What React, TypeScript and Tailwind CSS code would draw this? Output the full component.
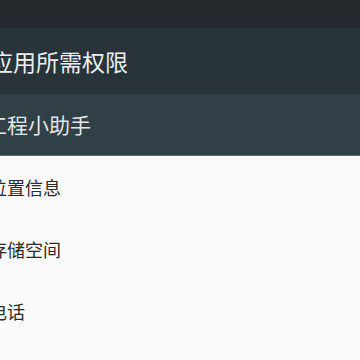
import React from "react";

export default function App() {
  const items = ["位置信息", "存储空间", "电话"];
  return (
    <div
      className="w-[360px] h-[360px] overflow-hidden bg-[#fafafa] flex flex-col"
      style={{ fontFamily: '"Noto Sans CJK SC", "Noto Sans", sans-serif' }}
    >
      <div className="h-[28px] bg-[#23292c] shrink-0" />
      <div className="h-[66px] bg-[#283439] flex items-center shrink-0">
        <span className="ml-[-10px] text-[23px] leading-none text-[#eceff0] whitespace-nowrap">
          应用所需权限
        </span>
      </div>
      <div className="h-[62px] bg-[#313f46] flex items-center shrink-0 border-b border-[#5d6b73]">
        <span className="ml-[-14px] text-[21px] leading-none text-[#e2e6e8] whitespace-nowrap">
          工程小助手
        </span>
      </div>
      <div className="flex flex-col">
        {items.map((t) => (
          <div key={t} className="h-[62px] flex items-center">
            <span className="ml-[-11px] text-[18px] leading-none text-[#2b2b2b] whitespace-nowrap">
              {t}
            </span>
          </div>
        ))}
      </div>
    </div>
  );
}
